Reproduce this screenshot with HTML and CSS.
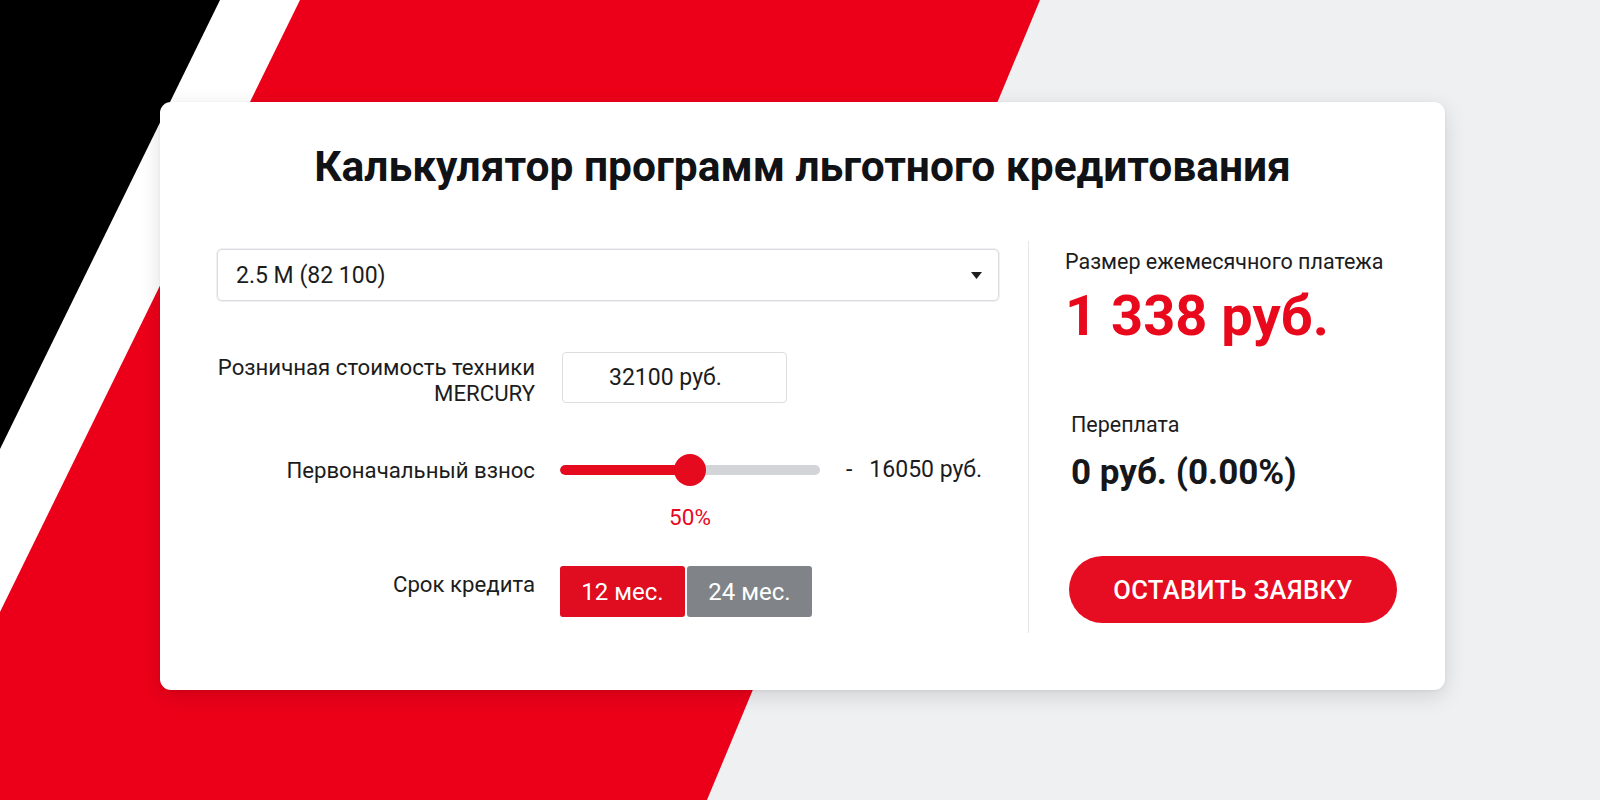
FILE: index.html
```html
<!DOCTYPE html>
<html lang="ru">
<head>
<meta charset="utf-8">
<title>Калькулятор программ льготного кредитования</title>
<link rel="stylesheet" href="styles.css">
</head>
<body>
<svg class="bg" width="1600" height="800" viewBox="0 0 1600 800" aria-hidden="true">
  <polygon points="220,0 300,0 0,612 0,449" fill="#ffffff"/>
  <polygon points="0,0 220,0 0,449" fill="#000000"/>
  <polygon points="300,0 1040,0 707,800 0,800 0,612" fill="#ec0019"/>
</svg>
<main class="card">
  <h1 class="title">Калькулятор программ льготного кредитования</h1>
  <div class="calc">
    <section class="inputs">
      <div class="select">
        <span class="select-value">2.5 M (82 100)</span>
        <svg class="select-arrow" width="11" height="7" viewBox="0 0 11 7"><polygon points="0,0 11,0 5.5,7" fill="#1e1e1e"/></svg>
      </div>
      <div class="row row-price">
        <div class="label">Розничная стоимость техники<br>MERCURY</div>
        <div class="field">32100 руб.</div>
      </div>
      <div class="row row-slider">
        <div class="label label-mid">Первоначальный взнос</div>
        <div class="slider-box">
          <div class="slider">
            <div class="track"><div class="fill" style="width:50%"></div></div>
            <div class="thumb" style="left:50%"></div>
          </div>
          <div class="pct">50%</div>
        </div>
        <span class="dash">-</span>
        <span class="amount">16050 руб.</span>
      </div>
      <div class="row row-term">
        <div class="label">Срок кредита</div>
        <div class="terms">
          <button class="term term-active">12 мес.</button>
          <button class="term">24 мес.</button>
        </div>
      </div>
    </section>
    <div class="divider"></div>
    <section class="results">
      <div class="res-label">Размер ежемесячного платежа</div>
      <div class="res-pay">1 338 руб.</div>
      <div class="res-label res-over-label">Переплата</div>
      <div class="res-over">0 руб. (0.00%)</div>
      <button class="cta">ОСТАВИТЬ ЗАЯВКУ</button>
    </section>
  </div>
</main>
</body>
</html>
```
FILE: styles.css
```css
* { box-sizing: border-box; }

html, body {
  margin: 0;
  width: 1600px;
  height: 800px;
  overflow: hidden;
}

body {
  position: relative;
  background: #eff0f2;
  padding: 102px 0 0 160px;
  font-family: Roboto, "Liberation Sans", Arial, sans-serif;
  color: #1b1c1f;
}

.bg {
  position: absolute;
  left: 0;
  top: 0;
  z-index: 0;
}

.card {
  position: relative;
  z-index: 1;
  width: 1285px;
  height: 588px;
  background: #ffffff;
  border-radius: 11px;
  box-shadow: 0 6px 22px rgba(0, 0, 0, 0.13), 0 1px 3px rgba(0, 0, 0, 0.06);
  padding-top: 41px;
}

.title {
  margin: 0;
  text-align: center;
  font-size: 42.5px;
  line-height: 48px;
  font-weight: 700;
  color: #101216;
}

.calc {
  display: flex;
  margin-top: 50px;
  padding: 0 48px 0 57px;
}

.inputs {
  width: 782px;
  padding-top: 8px;
}

.select {
  height: 52px;
  border: 1px solid #d9dbde;
  border-radius: 5px;
  box-shadow: 0 0 0 1px #f0f1f2;
  display: flex;
  align-items: center;
  justify-content: space-between;
  padding: 0 16px 0 18px;
  font-size: 23px;
  color: #1c1c1c;
}

.row {
  display: flex;
  align-items: flex-start;
}

.label {
  width: 318px;
  flex: none;
  text-align: right;
  white-space: nowrap;
  font-size: 22.2px;
  line-height: 26px;
  padding-top: 2px;
  color: #1c1c1c;
}

.row-price { margin-top: 51px; }

.field {
  margin-left: 27px;
  width: 225px;
  height: 51px;
  border: 1px solid #dcdde0;
  border-radius: 4px;
  display: flex;
  align-items: center;
  justify-content: flex-start;
  padding-left: 46px;
  font-size: 23px;
  color: #1c1c1c;
}

.row-slider { margin-top: 48px; }

.label-mid {
  line-height: 32px;
  padding-top: 0;
}

.slider-box {
  margin-left: 25px;
  width: 260px;
}

.slider {
  position: relative;
  height: 32px;
  display: flex;
  align-items: center;
}

.track {
  width: 100%;
  height: 10px;
  border-radius: 5px;
  background: #d2d4d7;
  overflow: hidden;
}

.fill {
  height: 100%;
  background: #e60a1f;
  border-radius: 5px 0 0 5px;
}

.thumb {
  position: absolute;
  top: 0;
  width: 32px;
  height: 32px;
  margin-left: -16px;
  border-radius: 50%;
  background: #e60a1f;
}

.pct {
  margin-top: 18px;
  text-align: center;
  font-size: 22.5px;
  line-height: 26px;
  color: #e60a1f;
}

.dash {
  margin-left: 26px;
  font-size: 23px;
  line-height: 32px;
}

.amount {
  margin-left: 17px;
  font-size: 23px;
  line-height: 32px;
}

.row-term { margin-top: 36px; }

.row-term .label { padding-top: 5px; }

.terms {
  margin-left: 25px;
  display: flex;
  gap: 2px;
}

.term {
  width: 125px;
  height: 51px;
  border: none;
  border-radius: 3px;
  background: #808489;
  color: #ffffff;
  font-family: inherit;
  font-size: 24px;
  padding: 0;
}

.term-active { background: #e00c1f; }

.divider {
  margin-left: 29px;
  width: 1px;
  height: 392px;
  background: #e6e7e9;
  flex: none;
}

.results {
  margin-left: 36px;
  flex: 1;
}

.res-label {
  margin-top: 8px;
  font-size: 21.5px;
  line-height: 26px;
  color: #1c1c1c;
}

.res-pay {
  margin-top: 9px;
  font-size: 56px;
  line-height: 64px;
  font-weight: 700;
  color: #e8091d;
}

.res-over-label {
  margin-top: 64px;
  padding-left: 6px;
}

.res-over {
  margin-top: 14px;
  padding-left: 6px;
  font-size: 35px;
  line-height: 42px;
  font-weight: 700;
  color: #16171a;
}

.cta {
  display: block;
  margin: 62px 0 0 4px;
  width: 328px;
  height: 67px;
  border: none;
  border-radius: 34px;
  background: #e60d22;
  color: #ffffff;
  font-family: inherit;
  font-size: 25.5px;
  font-weight: 500;
  letter-spacing: 0.4px;
  padding: 0;
}
```
